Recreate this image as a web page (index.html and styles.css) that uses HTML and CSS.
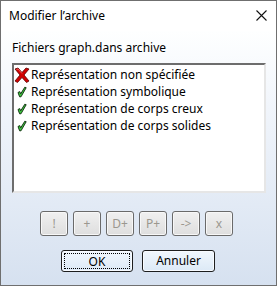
FILE: index.html
```html
<!DOCTYPE html>
<html>
<head>
<meta charset="utf-8">
<link rel="stylesheet" href="styles.css">
</head>
<body>
<div class="window">
  <div class="titlebar">
    <span class="title">Modifier l’archive</span>
    <svg class="close" width="11" height="11" viewBox="0 0 11 11"><path d="M0.5 0.5 L10.5 10.5 M10.5 0.5 L0.5 10.5" stroke="#111" stroke-width="1.1" fill="none"/></svg>
  </div>
  <div class="content">
    <div class="label">Fichiers graph.dans archive</div>
    <div class="listbox">
      <div class="row">
        <svg class="icon" width="16" height="16" viewBox="0 0 16 16">
          <path d="M1 2 L4 1 L8 5.5 L12 1 L15 2 L10 8 L15 14 L12.5 15.5 L8 10.5 L3.5 15.5 L1 14 L6 8 Z" fill="#d10000" stroke="#5a0000" stroke-width="0.8" stroke-linejoin="round"/>
          <path d="M2.5 2.5 L4 2 L8 6.5" stroke="#ff6a6a" stroke-width="0.8" fill="none"/>
        </svg>
        <span>Représentation non spécifiée</span>
      </div>
      <div class="row">
        <svg class="icon" width="16" height="16" viewBox="0 0 16 16"><path d="M4 8.5 L5.8 7.6 L6.7 9.8 L10.8 3.2 L12.2 3.7 L7 12.8 L5.6 12.8 Z" fill="#3ec43e" stroke="#0b2a0b" stroke-width="0.9" stroke-linejoin="round"/></svg>
        <span>Représentation symbolique</span>
      </div>
      <div class="row">
        <svg class="icon" width="16" height="16" viewBox="0 0 16 16"><path d="M4 8.5 L5.8 7.6 L6.7 9.8 L10.8 3.2 L12.2 3.7 L7 12.8 L5.6 12.8 Z" fill="#3ec43e" stroke="#0b2a0b" stroke-width="0.9" stroke-linejoin="round"/></svg>
        <span>Représentation de corps creux</span>
      </div>
      <div class="row">
        <svg class="icon" width="16" height="16" viewBox="0 0 16 16"><path d="M4 8.5 L5.8 7.6 L6.7 9.8 L10.8 3.2 L12.2 3.7 L7 12.8 L5.6 12.8 Z" fill="#3ec43e" stroke="#0b2a0b" stroke-width="0.9" stroke-linejoin="round"/></svg>
        <span>Représentation de corps solides</span>
      </div>
    </div>
    <div class="tools">
      <button class="tool" disabled>!</button>
      <button class="tool" disabled>+</button>
      <button class="tool" disabled>D+</button>
      <button class="tool" disabled>P+</button>
      <button class="tool" disabled>-&gt;</button>
      <button class="tool" disabled>x</button>
    </div>
    <div class="actions">
      <button class="btn ok"><span class="focus">OK</span></button>
      <button class="btn">Annuler</button>
    </div>
  </div>
</div>
</body>
</html>
```
FILE: styles.css
```css
html, body {
  margin: 0;
  padding: 0;
}
body {
  width: 277px;
  height: 286px;
  font-family: "Noto Sans", "DejaVu Sans", sans-serif;
  font-size: 12px;
  color: #000;
}
.window {
  box-sizing: border-box;
  width: 277px;
  height: 286px;
  border: 1px solid #6f6f6f;
  display: flex;
  flex-direction: column;
  background: #fff;
}
.titlebar {
  height: 30px;
  flex: none;
  display: flex;
  align-items: center;
  justify-content: space-between;
  padding: 0 9px 0 8px;
  background: #fff;
}
.title {
  font-size: 12px;
  color: #000;
  margin-top: -1px;
}
.close {
  display: block;
  margin-top: -1px;
}
.content {
  flex: 1;
  display: flex;
  flex-direction: column;
  background: linear-gradient(#feffff 0%, #f1f5fb 30%, #d6e1f0 100%);
  padding: 9px 0 0 11px;
}
.label {
  height: 16px;
  line-height: 16px;
  margin-bottom: 7px;
}
.listbox {
  box-sizing: border-box;
  width: 254px;
  height: 130px;
  background: #fff;
  border-style: solid;
  border-width: 2px;
  border-color: #6d6d6d #e6e6e6 #e6e6e6 #6d6d6d;
  padding-top: 1px;
}
.row {
  height: 17px;
  display: flex;
  align-items: center;
  gap: 1px;
  line-height: 17px;
  white-space: nowrap;
}
.icon {
  display: block;
  flex: none;
}
.tools {
  display: flex;
  gap: 5px;
  margin-top: 18px;
  padding-left: 28px;
}
.tool {
  box-sizing: border-box;
  width: 28px;
  height: 25px;
  padding: 0;
  border: 1px solid #6a6a6a;
  border-radius: 3px;
  background: linear-gradient(#f0f0f0, #dedede);
  box-shadow: inset 0 0 0 1px #f7f7f7;
  color: #9b978f;
  font-family: "Noto Sans", "DejaVu Sans", sans-serif;
  font-size: 12px;
  line-height: 21px;
}
.actions {
  display: flex;
  gap: 9px;
  margin-top: 14px;
  padding-left: 49px;
}
.btn {
  box-sizing: border-box;
  width: 73px;
  height: 22px;
  padding: 0;
  border: 1px solid #1e1e1e;
  border-radius: 3px;
  background: linear-gradient(#f1f7fd, #dce9f6);
  box-shadow: inset 0 0 0 1px #f8fbff;
  color: #000;
  font-family: "Noto Sans", "DejaVu Sans", sans-serif;
  font-size: 12px;
  line-height: 18px;
}
.ok {
  width: 72px;
  padding: 2px;
}
.focus {
  display: block;
  height: 16px;
  line-height: 15px;
  box-sizing: border-box;
  border: 1px dotted #000;
}
```
